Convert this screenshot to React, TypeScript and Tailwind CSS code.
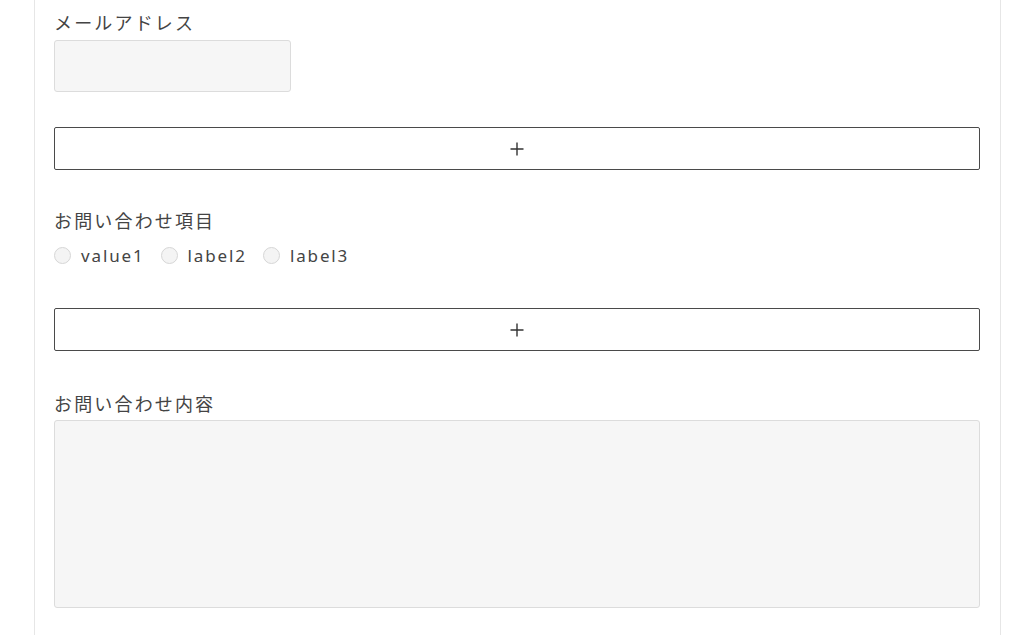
import React from "react";

const font = { fontFamily: '"Noto Sans CJK JP", "Noto Sans", sans-serif' };

function AddButton() {
  return (
    <button
      type="button"
      className="w-full h-[43px] border border-[#4a4a4a] rounded-[2px] bg-white flex items-center justify-center text-[#333]"
    >
      <svg width="14" height="14" viewBox="0 0 14 14">
        <path d="M7 0.5V13.5M0.5 7H13.5" stroke="#333" strokeWidth="1.4" />
      </svg>
    </button>
  );
}

function Radio({ label }: { label: string }) {
  return (
    <label className="flex items-center gap-[10px] mr-[16px]">
      <input
        type="radio"
        name="item"
        className="appearance-none w-[17px] h-[17px] rounded-full border border-[#d6d6d6] bg-[#f4f4f4] m-0 shrink-0"
      />
      <span
        className="text-[17px] tracking-[0.11em] text-[#444]"
        style={{ fontFamily: '"Noto Sans", "Open Sans", sans-serif' }}
      >
        {label}
      </span>
    </label>
  );
}

export default function App() {
  return (
    <div className="bg-white h-[635px] overflow-hidden" style={font}>
      <div className="ml-[34px] w-[967px] h-full border-x border-[#e6e6e6] pl-[19px] pr-[20px] pt-[9px]">
        {/* メールアドレス */}
        <div className="text-[18px] leading-[27px] tracking-[0.12em] text-[#444]">メールアドレス</div>
        <input
          type="text"
          className="block mt-[4px] w-[237px] h-[52px] border border-[#dcdcdc] rounded-[3px] bg-[#f6f6f6]"
        />

        <div className="mt-[35px]">
          <AddButton />
        </div>

        {/* お問い合わせ項目 */}
        <div className="mt-[37px] text-[18px] leading-[27px] tracking-[0.12em] text-[#444]">お問い合わせ項目</div>
        <div className="flex items-center h-[27px] mt-[8px]">
          <Radio label="value1" />
          <Radio label="label2" />
          <Radio label="label3" />
        </div>

        <div className="mt-[39px]">
          <AddButton />
        </div>

        {/* お問い合わせ内容 */}
        <div className="mt-[39px] text-[18px] leading-[27px] tracking-[0.12em] text-[#444]">お問い合わせ内容</div>
        <textarea className="block mt-[3px] w-full h-[188px] border border-[#dcdcdc] rounded-[3px] bg-[#f6f6f6] resize-none" />
      </div>
    </div>
  );
}
